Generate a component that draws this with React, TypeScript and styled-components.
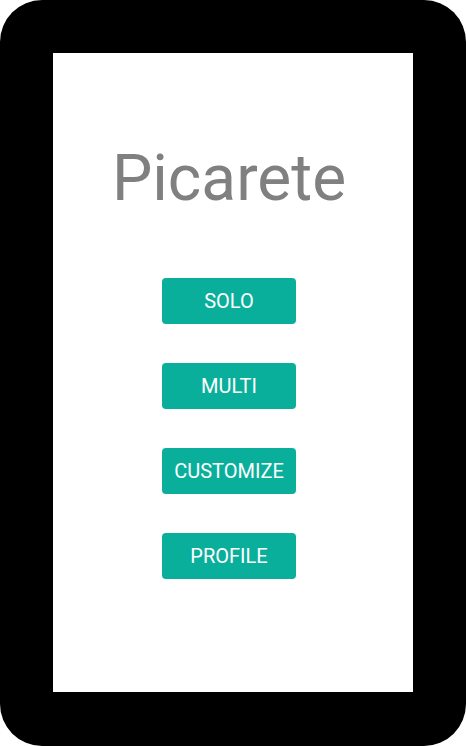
import styled, { createGlobalStyle } from 'styled-components';

const GlobalStyle = createGlobalStyle`
  html, body {
    margin: 0;
    padding: 0;
    background: #fff;
  }
  body {
    font-family: Roboto, "Liberation Sans", sans-serif;
  }
`;

const Device = styled.div`
  width: 466px;
  height: 746px;
  box-sizing: border-box;
  padding: 53px;
  background: #000;
  border-radius: 42px;
`;

const Screen = styled.div`
  width: 360px;
  height: 639px;
  box-sizing: border-box;
  padding-right: 8px;
  background: #fff;
  display: flex;
  flex-direction: column;
  align-items: center;
`;

const Title = styled.h1`
  margin: 86px 0 0;
  font-family: Roboto, sans-serif;
  font-weight: 400;
  font-size: 64px;
  line-height: 80px;
  color: #808080;
  letter-spacing: 0;
`;

const Menu = styled.div`
  margin-top: 59px;
  display: flex;
  flex-direction: column;
  gap: 39px;
`;

const MenuButton = styled.button`
  width: 134px;
  height: 46px;
  border: 0;
  border-radius: 4px;
  background: #0aaf9c;
  color: #fff;
  font-family: Roboto, sans-serif;
  font-size: 20px;
  text-transform: uppercase;
  padding: 0;
  cursor: pointer;
`;

const items = ['Solo', 'Multi', 'Customize', 'Profile'];

export default function App() {
  return (
    <>
      <GlobalStyle />
      <Device>
        <Screen>
          <Title>Picarete</Title>
          <Menu>
            {items.map((label) => (
              <MenuButton key={label}>{label}</MenuButton>
            ))}
          </Menu>
        </Screen>
      </Device>
    </>
  );
}
